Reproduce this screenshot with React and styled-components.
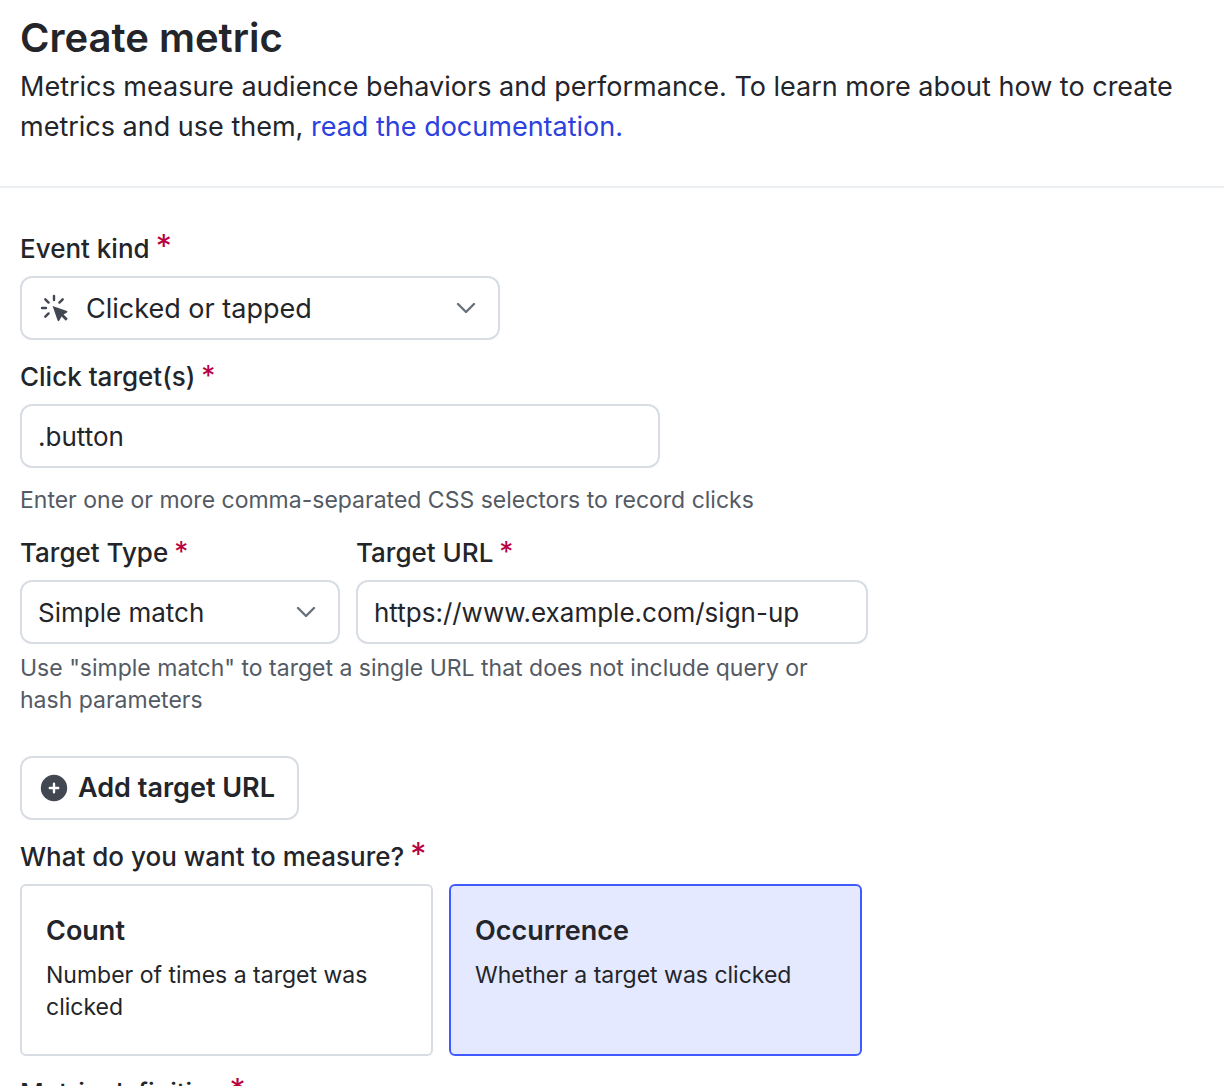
import { useState } from "react";
import styled, { createGlobalStyle } from "styled-components";

const GlobalStyle = createGlobalStyle`
    :root {
        --color-text: #23252a;
        --color-muted: #545a64;
        --color-icon: #414851;
        --color-border: #d8dde3;
        --color-divider: #ebeff2;
        --color-link: #2c41dd;
        --color-accent: #405bff;
        --color-accent-bg: #e4e9ff;
        --color-required: #b8003f;
        --font_sm: 23px;
        --font_control: 26px;
        --font_md: 27px;
        --font_lg: 40px;
    }

    *, *::before, *::after {
        box-sizing: border-box;
    }

    body {
        margin: 0;
        background: white;
        color: var(--color-text);
        font-family: Inter, "Liberation Sans", sans-serif;
        font-size: var(--font_md);
        line-height: 40px;
    }
`;

const Page = styled.div`
    height: 100vh;
    overflow: hidden;
`;

const Header = styled.header`
    padding: 14px 20px 39px;
    border-bottom: 2px solid var(--color-divider);
`;

const Title = styled.h1`
    margin: 0 0 5px;
    font-size: var(--font_lg);
    font-weight: 600;
    line-height: 48px;
`;

const Intro = styled.p`
    margin: 0;
`;

const DocLink = styled.a`
    color: var(--color-link);
    text-decoration: none;
`;

const Form = styled.form`
    display: flex;
    flex-direction: column;
    gap: 16px;
    padding: 40px 20px;
`;

const Field = styled.div`
    display: flex;
    flex-direction: column;
    gap: 6px;
    width: 100%;
    max-width: ${({$maxWidth}) => $maxWidth}px;
`;

const Label = styled.label`
    font-size: var(--font_control);
    font-weight: 500;
    line-height: 42px;
`;

const Required = styled.span`
    margin-left: 6px;
    color: var(--color-required);
    font-size: ${({$large}) => $large ? 32 : 28}px;
    font-weight: 400;
    line-height: 1;
`;

const SelectWrapper = styled.div`
    position: relative;
    color: var(--color-icon);
`;

const Prefix = styled.span`
    position: absolute;
    top: 18px;
    left: 20px;
    display: flex;
    pointer-events: none;
`;

const Postfix = styled.span`
    position: absolute;
    top: 22px;
    right: 24px;
    display: flex;
    color: #69707c;
    pointer-events: none;
`;

const Control = styled.input`
    display: block;
    width: 100%;
    height: 64px;
    padding: 0 16px;
    border: 2px solid var(--color-border);
    border-radius: 12px;
    outline: none;
    background: white;
    color: inherit;
    font: inherit;
    font-size: var(--font_control);
    appearance: none;

    &:focus-visible {
        border-color: var(--color-accent);
    }
`;

const SelectControl = styled(Control)`
    padding-top: 2px;
    padding-left: ${({$hasIcon}) => $hasIcon ? 64 : 16}px;
    color: var(--color-text);
    font-size: ${({$hasIcon}) => $hasIcon ? 'var(--font_md)' : 'var(--font_control)'};
    cursor: pointer;
`;

const Hint = styled.p`
    max-width: 820px;
    margin: 0;
    color: var(--color-muted);
    font-size: var(--font_sm);
    line-height: 32px;
`;

const Targets = styled.div`
    display: flex;
    flex-direction: column;
    gap: 8px;
    max-width: 848px;
    margin-bottom: 24px;
`;

const TargetRow = styled.div`
    display: grid;
    grid-template-columns: 5fr 8fr;
    gap: 16px;
`;

const AddButton = styled.button`
    display: flex;
    align-items: center;
    align-self: flex-start;
    gap: 10px;
    height: 64px;
    padding: 0 22px 0 18px;
    border: 2px solid var(--color-border);
    border-radius: 12px;
    background: white;
    color: inherit;
    font: inherit;
    font-weight: 600;
    cursor: pointer;
`;

const Measure = styled.fieldset`
    min-width: 0;
    max-width: 842px;
    margin: 0;
    padding: 0;
    border: none;
`;

const Legend = styled.legend`
    margin-bottom: 6px;
    padding: 0;
    font-size: var(--font_control);
    font-weight: 500;
    line-height: 42px;
`;

const Cards = styled.div`
    display: grid;
    grid-template-columns: 1fr 1fr;
    gap: 16px;
`;

const Card = styled.label`
    display: flex;
    flex-direction: column;
    gap: 8px;
    padding: 25px 24px 31px;
    border: 2px solid ${({$checked}) => $checked ? 'var(--color-accent)' : 'var(--color-border)'};
    border-radius: 6px;
    background: ${({$checked}) => $checked ? 'var(--color-accent-bg)' : 'white'};
    cursor: pointer;
`;

const CardRadio = styled.input`
    position: absolute;
    opacity: 0;
    pointer-events: none;
`;

const CardTitle = styled.span`
    font-weight: 600;
`;

const CardText = styled.span`
    font-size: var(--font_sm);
    line-height: 32px;
`;

const ClickIcon = () => (
    <svg width="28" height="28" viewBox="0 0 28 28" fill="none" aria-hidden="true">
        <path d="M14 2V6M2 14H6M5.3 5.3L8.6 8.6M22.7 5.3L19.4 8.6M5.3 22.7L8.6 19.4" stroke="currentColor" strokeWidth="2.4" strokeLinecap="round"/>
        <path d="M12.6 12L27 17Q28 17.8 27 18.6L23.6 20.6L27.8 24.8L25.8 26.8L21.6 22.6L19.2 26.8Q18.4 27.8 17.6 26.6Z" fill="currentColor"/>
    </svg>
);

const ChevronIcon = () => (
    <svg width="20" height="20" viewBox="0 0 20 20" fill="none" aria-hidden="true">
        <path d="M2 6L10 14L18 6" stroke="currentColor" strokeWidth="2.4" strokeLinecap="round" strokeLinejoin="round"/>
    </svg>
);

const PlusIcon = () => (
    <svg width="28" height="28" viewBox="0 0 28 28" aria-hidden="true">
        <circle cx="14" cy="14" r="13.2" fill="#414851"/>
        <path d="M14 9.8V18.2M9.8 14H18.2" stroke="white" strokeWidth="2.4" strokeLinecap="round"/>
    </svg>
);

const Star = ({large}) => <Required $large={large} aria-hidden="true">*</Required>;

const Select = ({id, options, icon}) => (
    <SelectWrapper>
        <SelectControl as="select" id={id} $hasIcon={Boolean(icon)} required>
            {options.map((name) => (
                <option key={name}>{name}</option>
            ))}
        </SelectControl>
        {icon && <Prefix>{icon}</Prefix>}
        <Postfix><ChevronIcon /></Postfix>
    </SelectWrapper>
);

const measures = [
    {id: 'count', title: 'Count', text: 'Number of times a target was clicked'},
    {id: 'occurrence', title: 'Occurrence', text: 'Whether a target was clicked'},
];

export default function App() {
    const [measure, setMeasure] = useState('occurrence');

    return (
        <Page>
            <GlobalStyle />
            <Header>
                <Title>Create metric</Title>
                <Intro>
                    Metrics measure audience behaviors and performance. To learn more about how to create
                    metrics and use them, <DocLink href="#documentation">read the documentation.</DocLink>
                </Intro>
            </Header>
            <Form onSubmit={(e) => e.preventDefault()}>
                <Field $maxWidth={480}>
                    <Label htmlFor="kind">Event kind<Star large /></Label>
                    <Select id="kind" options={['Clicked or tapped']} icon={<ClickIcon />} />
                </Field>
                <Field $maxWidth={640}>
                    <Label htmlFor="selectors">Click target(s)<Star /></Label>
                    <Control id="selectors" type="text" defaultValue=".button" required />
                </Field>
                <Hint>Enter one or more comma-separated CSS selectors to record clicks</Hint>
                <Targets>
                    <TargetRow>
                        <Field>
                            <Label htmlFor="type">Target Type<Star /></Label>
                            <Select id="type" options={['Simple match']} />
                        </Field>
                        <Field>
                            <Label htmlFor="url">Target URL<Star /></Label>
                            <Control id="url" type="text" defaultValue="https://www.example.com/sign-up" required />
                        </Field>
                    </TargetRow>
                    <Hint>Use "simple match" to target a single URL that does not include query or hash parameters</Hint>
                </Targets>
                <AddButton type="button"><PlusIcon />Add target URL</AddButton>
                <Measure>
                    <Legend>What do you want to measure?<Star large /></Legend>
                    <Cards>
                        {measures.map(({id, title, text}) => (
                            <Card key={id} $checked={measure === id}>
                                <CardRadio
                                    type="radio"
                                    name="measure"
                                    checked={measure === id}
                                    onChange={() => setMeasure(id)}
                                />
                                <CardTitle>{title}</CardTitle>
                                <CardText>{text}</CardText>
                            </Card>
                        ))}
                    </Cards>
                </Measure>
                <Label as="div">Metric definition<Star large /></Label>
            </Form>
        </Page>
    );
}
